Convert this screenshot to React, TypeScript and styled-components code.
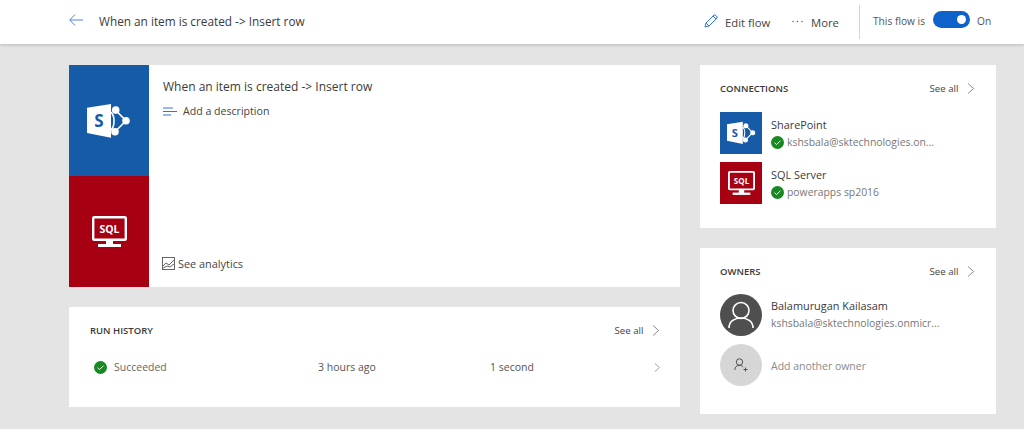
import React from "react";
import styled, { createGlobalStyle } from "styled-components";

const GlobalStyle = createGlobalStyle`
  html, body {
    margin: 0;
    padding: 0;
    background: #e4e4e4;
    font-family: "Open Sans", "Noto Sans", sans-serif;
    color: #333;
    overflow: hidden;
  }
`;

const Page = styled.div`
  width: 1024px;
  height: 429px;
  overflow: hidden;
`;

const Header = styled.header`
  height: 44px;
  background: #fff;
  box-shadow: 0 1px 3px rgba(0, 0, 0, 0.2);
  display: flex;
  align-items: center;
  padding: 0 0 2px 69px;
  box-sizing: border-box;
`;

const BackButton = styled.span`
  display: flex;
  width: 30px;
  margin-bottom: 2px;
`;

const HeaderTitle = styled.div`
  font-size: 11.8px;
  color: #3a3a3a;
  flex: 1;
`;

const HeaderAction = styled.div<{ $gap: number; $width: number }>`
  display: flex;
  align-items: center;
  gap: ${(p) => p.$gap}px;
  width: ${(p) => p.$width}px;
  font-size: 11.3px;
  color: #444;
  margin-top: 2px;

  svg {
    margin-bottom: 2px;
  }
`;

const Divider = styled.div`
  width: 1px;
  height: 34px;
  background: #d4d4d4;
  margin: 1px 13px 0 20px;
`;

const FlowState = styled.div`
  display: flex;
  align-items: center;
  font-size: 10.2px;
  color: #555;
  width: 151px;
`;

const Toggle = styled.div`
  width: 37px;
  height: 17px;
  border-radius: 9px;
  background: #0f62c9;
  margin: 0 7px 4px 8px;
  display: flex;
  align-items: center;
  justify-content: flex-end;
  padding-right: 4px;
  box-sizing: border-box;
`;

const ToggleKnob = styled.div`
  width: 9px;
  height: 9px;
  border-radius: 50%;
  background: #fff;
`;

const Main = styled.main`
  display: grid;
  grid-template-columns: 611px 296px;
  column-gap: 20px;
  padding: 21px 0 0 69px;
  align-items: start;
`;

const Column = styled.div`
  display: flex;
  flex-direction: column;
  gap: 20px;
`;

const Card = styled.section<{ $height: number }>`
  background: #fff;
  height: ${(p) => p.$height}px;
  box-sizing: border-box;
`;

const FlowCard = styled(Card)`
  display: flex;
`;

const ServiceStack = styled.div`
  width: 80px;
  display: flex;
  flex-direction: column;
`;

const ServiceTile = styled.div<{ $bg: string; $size?: number }>`
  background: ${(p) => p.$bg};
  display: flex;
  align-items: center;
  justify-content: center;
  flex: ${(p) => (p.$size ? `0 0 ${p.$size}px` : "1")};
  width: ${(p) => (p.$size ? `${p.$size}px` : "auto")};
  height: ${(p) => (p.$size ? `${p.$size}px` : "auto")};
`;

const FlowBody = styled.div`
  flex: 1;
  display: flex;
  flex-direction: column;
  padding: 13px 14px 16px;
`;

const FlowTitle = styled.div`
  font-size: 12px;
  color: #3a3a3a;
  line-height: 17px;
`;

const DescriptionRow = styled.div`
  display: flex;
  align-items: center;
  gap: 6px;
  margin-top: 9px;
  font-size: 10.6px;
  color: #444;
  line-height: 15px;
`;

const AnalyticsRow = styled.div`
  display: flex;
  align-items: center;
  gap: 3px;
  margin-top: auto;
  font-size: 10.9px;
  color: #444;
  line-height: 15px;
  margin-left: -1px;
`;

const CardHeader = styled.div`
  display: flex;
  align-items: center;
  justify-content: space-between;
`;

const CardLabel = styled.div`
  font-size: 9.5px;
  font-weight: 600;
  color: #3a3a3a;
`;

const SeeAll = styled.div`
  display: flex;
  align-items: center;
  gap: 9px;
  font-size: 9.6px;
  color: #444;
`;

const HistoryCard = styled(Card)`
  padding: 17px 20px 0 21px;
`;

const HistoryRow = styled.div`
  display: grid;
  grid-template-columns: 228px 172px 1fr 8px;
  align-items: center;
  margin-top: 23px;
  font-size: 10.5px;
  color: #555;

  svg:last-child {
    justify-self: end;
  }
`;

const HistoryStatus = styled.div`
  display: flex;
  align-items: center;
  gap: 7px;
  margin-left: 4px;
  color: #666;
`;

const SideCard = styled(Card)`
  padding: 17px 21px 0 20px;
`;

const EntityList = styled.div<{ $top: number; $gap: number }>`
  display: flex;
  flex-direction: column;
  gap: ${(p) => p.$gap}px;
  margin-top: ${(p) => p.$top}px;
`;

const EntityRow = styled.div`
  display: flex;
  align-items: center;
  gap: 9px;
`;

const EntityText = styled.div<{ $drop?: number }>`
  display: flex;
  flex-direction: column;
  padding-top: ${(p) => p.$drop ?? 0}px;
`;

const EntityName = styled.div`
  font-size: 10.9px;
  color: #3a3a3a;
  line-height: 16px;
`;

const EntityDetail = styled.div`
  display: flex;
  align-items: center;
  gap: 3px;
  font-size: 10.4px;
  color: #777;
  line-height: 18px;
  white-space: nowrap;
`;

const Avatar = styled.div<{ $bg: string }>`
  width: 42px;
  height: 42px;
  border-radius: 50%;
  background: ${(p) => p.$bg};
  display: flex;
  align-items: center;
  justify-content: center;
`;

const AddOwner = styled.div`
  font-size: 10.5px;
  color: #8a8a8a;
  padding-top: 2px;
`;

const Chevron = ({ size = 11 }: { size?: number }) => (
  <svg width={size * 0.7} height={size} viewBox="0 0 7 10" fill="none" stroke="#666" strokeWidth="0.7">
    <path d="M1 0.5 L6 5 L1 9.5" />
  </svg>
);

const CheckBadge = ({ size = 13 }: { size?: number }) => (
  <svg width={size} height={size} viewBox="0 0 14 14">
    <circle cx="7" cy="7" r="7" fill="#148a1f" />
    <path d="M3.8 7.2 L6 9.3 L10.2 5" fill="none" stroke="#fff" strokeWidth="1" />
  </svg>
);

const SharePointIcon = ({ size = 44 }: { size?: number }) => (
  <svg width={size} height={size * 0.8} viewBox="0 0 44 35">
    <path d="M28.5 7 L39 17.7 L28 28.7" fill="none" stroke="#fff" strokeWidth="1.6" />
    <path d="M24 9 C28 13 28 23 24 27" fill="none" stroke="#fff" strokeWidth="1.6" />
    <path d="M0 4.7 L24 1 V34.7 L0 30 Z" fill="#fff" />
    <text x="12" y="24" textAnchor="middle" fontFamily="Open Sans, sans-serif" fontWeight="700" fontSize="17" fill="#155ba8">
      S
    </text>
    <circle cx="28.7" cy="7" r="3.8" fill="#fff" />
    <circle cx="39" cy="17.7" r="3.8" fill="#fff" />
    <circle cx="28" cy="28.7" r="3.8" fill="#fff" />
  </svg>
);

const SqlIcon = ({ size = 35 }: { size?: number }) => (
  <svg width={size} height={size * 0.886} viewBox="0 0 35 31">
    <rect x="1.2" y="1.2" width="32.6" height="22.6" rx="1" fill="none" stroke="#fff" strokeWidth="2.4" />
    <text x="17.5" y="16.5" textAnchor="middle" fontFamily="Open Sans, sans-serif" fontWeight="700" fontSize="10.5" fill="#fff">
      SQL
    </text>
    <rect x="14" y="24" width="7" height="5" fill="#fff" />
    <rect x="6" y="28" width="23" height="3" fill="#fff" />
  </svg>
);

const App = () => (
  <Page>
    <GlobalStyle />
    <Header>
      <BackButton>
        <svg width="14" height="12" viewBox="0 0 14 12" fill="none" stroke="#3c78d8" strokeWidth="0.9">
          <path d="M14 6 H0.8 M6 0.5 L0.8 6 L6 11.5" />
        </svg>
      </BackButton>
      <HeaderTitle>When an item is created -&gt; Insert row</HeaderTitle>
      <HeaderAction $gap={7} $width={88}>
        <svg width="14" height="14" viewBox="0 0 14 14" fill="none" stroke="#2f74d8" strokeWidth="1">
          <path d="M1 13 L2 9 L10 1 Q11 0.5 12.5 2 Q13.5 3 13 4 L5 12 Z M2 9 L5 12 M9 2 L12 5" />
        </svg>
        Edit flow
      </HeaderAction>
      <HeaderAction $gap={8} $width={47}>
        <svg width="11" height="3" viewBox="0 0 11 3" fill="#555">
          <circle cx="1" cy="1.5" r="0.7" />
          <circle cx="5.5" cy="1.5" r="0.7" />
          <circle cx="10" cy="1.5" r="0.7" />
        </svg>
        More
      </HeaderAction>
      <Divider />
      <FlowState>
        This flow is
        <Toggle>
          <ToggleKnob />
        </Toggle>
        On
      </FlowState>
    </Header>
    <Main>
      <Column>
        <FlowCard $height={222}>
          <ServiceStack>
            <ServiceTile $bg="#155ba8">
              <SharePointIcon />
            </ServiceTile>
            <ServiceTile $bg="#a80013">
              <SqlIcon />
            </ServiceTile>
          </ServiceStack>
          <FlowBody>
            <FlowTitle>When an item is created -&gt; Insert row</FlowTitle>
            <DescriptionRow>
              <svg width="14" height="9" viewBox="0 0 14 9" fill="none" stroke="#2f74d8" strokeWidth="1">
                <path d="M0 1 H10 M0 4.5 H14 M0 8 H8" />
              </svg>
              Add a description
            </DescriptionRow>
            <AnalyticsRow>
              <svg width="13" height="13" viewBox="0 0 13 13" fill="none" stroke="#555" strokeWidth="0.9">
                <rect x="0.5" y="0.5" width="12" height="12" />
                <path d="M1 9 L4 6 L7 8 L12 3 M1 11 L5 9 L8 10 L12 7" />
              </svg>
              See analytics
            </AnalyticsRow>
          </FlowBody>
        </FlowCard>
        <HistoryCard $height={100}>
          <CardHeader>
            <CardLabel>RUN HISTORY</CardLabel>
            <SeeAll>
              See all
              <Chevron />
            </SeeAll>
          </CardHeader>
          <HistoryRow>
            <HistoryStatus>
              <CheckBadge />
              Succeeded
            </HistoryStatus>
            <div>3 hours ago</div>
            <div>1 second</div>
            <Chevron size={9} />
          </HistoryRow>
        </HistoryCard>
      </Column>
      <Column>
        <SideCard $height={163}>
          <CardHeader>
            <CardLabel>CONNECTIONS</CardLabel>
            <SeeAll>
              See all
              <Chevron />
            </SeeAll>
          </CardHeader>
          <EntityList $top={17} $gap={8}>
            <EntityRow>
              <ServiceTile $bg="#155ba8" $size={42}>
                <SharePointIcon size={29} />
              </ServiceTile>
              <EntityText $drop={2}>
                <EntityName>SharePoint</EntityName>
                <EntityDetail>
                  <CheckBadge />
                  kshsbala@sktechnologies.on...
                </EntityDetail>
              </EntityText>
            </EntityRow>
            <EntityRow>
              <ServiceTile $bg="#a80013" $size={42}>
                <SqlIcon size={27} />
              </ServiceTile>
              <EntityText $drop={2}>
                <EntityName>SQL Server</EntityName>
                <EntityDetail>
                  <CheckBadge />
                  powerapps sp2016
                </EntityDetail>
              </EntityText>
            </EntityRow>
          </EntityList>
        </SideCard>
        <SideCard $height={166}>
          <CardHeader>
            <CardLabel>OWNERS</CardLabel>
            <SeeAll>
              See all
              <Chevron />
            </SeeAll>
          </CardHeader>
          <EntityList $top={16} $gap={8}>
            <EntityRow>
              <Avatar $bg="#4f4f4f">
                <svg width="26" height="28" viewBox="0 0 26 28" fill="none" stroke="#fff" strokeWidth="1.6">
                  <circle cx="13" cy="9.5" r="8" />
                  <path d="M1 27 C1 20 7 17 13 17 C19 17 25 20 25 27" />
                </svg>
              </Avatar>
              <EntityText>
                <EntityName>Balamurugan Kailasam</EntityName>
                <EntityDetail>kshsbala@sktechnologies.onmicr...</EntityDetail>
              </EntityText>
            </EntityRow>
            <EntityRow>
              <Avatar $bg="#d6d6d6">
                <svg width="14" height="14" viewBox="0 0 14 14" fill="none" stroke="#444" strokeWidth="0.9">
                  <circle cx="5.5" cy="4" r="3.2" />
                  <path d="M0.8 12 C0.8 8.8 3 7.4 5.5 7.4 C7 7.4 8.4 8 9.2 9 M9.5 11.5 H13.5 M11.5 9.5 V13.5" />
                </svg>
              </Avatar>
              <AddOwner>Add another owner</AddOwner>
            </EntityRow>
          </EntityList>
        </SideCard>
      </Column>
    </Main>
  </Page>
);

export default App;
